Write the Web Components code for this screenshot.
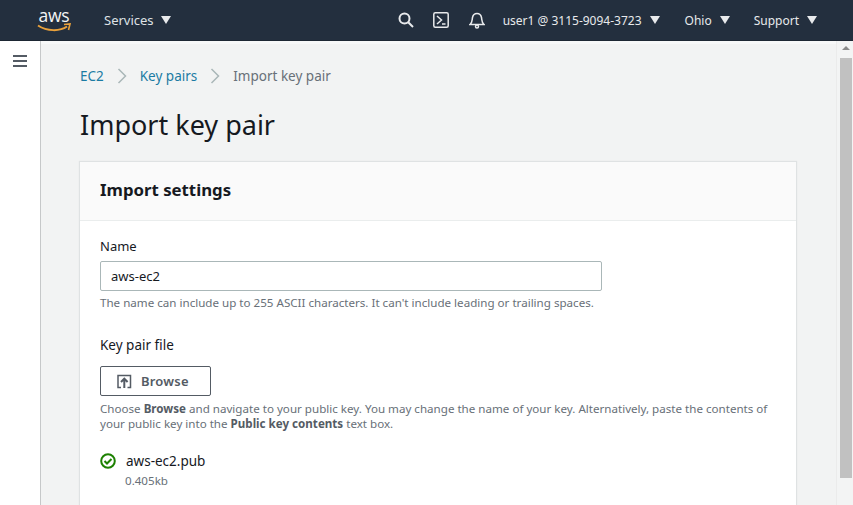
<!DOCTYPE html>
<html lang="en"><head><meta charset="utf-8"><title>Import key pair</title>
<style>
html,body{margin:0;height:505px;overflow:hidden;background:#f2f3f3}
body{font-family:"Noto Sans","Open Sans",sans-serif;color:#16191f}
</style></head><body>
<aws-console>
  <aws-topbar slot="top"></aws-topbar>
  <aws-sidenav slot="side"></aws-sidenav>
  <aws-crumbs></aws-crumbs>
  <h1-title>Import key pair</h1-title>
  <aws-card heading="Import settings">
    <aws-field label="Name" hint="The name can include up to 255 ASCII characters. It can't include leading or trailing spaces.">
      <aws-input value="aws-ec2"></aws-input>
    </aws-field>
    <aws-filefield></aws-filefield>
  </aws-card>
</aws-console>
<script>
function def(name, html){
  customElements.define(name, class extends HTMLElement{
    connectedCallback(){
      if(this.shadowRoot) return;
      const r=this.attachShadow({mode:'open'});
      r.innerHTML=typeof html==='function'?html(this):html;
    }
  });
}
const caret='<svg width="10" height="8" viewBox="0 0 10 8"><path d="M0 0H10L5 8Z" fill="#e8eaec"/></svg>';
const chev='<svg width="10" height="16" viewBox="0 0 10 16" fill="none" stroke="#aab7b8" stroke-width="1.5"><path d="M1.500 1l7 7-7 7"/></svg>';
def('aws-console',`<style>
:host{display:grid;grid-template-rows:41px 464px;grid-template-columns:41px 1fr 17px;height:505px;overflow:hidden}
.top{grid-column:1/4}
.main{padding:0 0 0 39px;min-width:0;overflow:hidden;border-top:3px solid #f7f8f8;box-sizing:border-box}
.bar{background:#f3f4f4;display:flex;flex-direction:column;align-items:center;border-left:1px solid #ebebeb;box-sizing:border-box;padding-left:1px}
.up{width:0;height:0;border:4px solid transparent;border-top:0;border-bottom:4px solid #8a8a8a;margin-top:5px}
.thumb{width:12px;height:420px;background:#c1c1c1;margin-top:8px}
</style>
<div class="top"><slot name="top"></slot></div>
<slot name="side"></slot>
<div class="main"><slot></slot></div>
<div class="bar"><div class="up"></div><div class="thumb"></div></div>`);
def('aws-topbar',`<style>
:host{display:flex;align-items:center;height:41px;background:#232f3e;color:#e8eaec;font-size:12px;box-sizing:border-box;padding:0 36px 0 37px;border-bottom:1px solid #1d2733}
.logo{display:flex;flex-direction:column;align-items:center;width:34px;height:32px;position:relative;margin-top:-2px}
.logo b{font:400 17.500px/1 "Open Sans","Noto Sans",sans-serif;letter-spacing:-.2px;color:#f3f4f5;margin-top:4px}
.logo svg{position:absolute;left:0;top:19px}
.svc{margin-left:33px;font-size:13px;display:flex;gap:7px;align-items:center;color:#dfe2e5}
.sp{flex:1}
.i{display:flex;align-items:center}
.u{display:flex;align-items:center;gap:8px;white-space:nowrap;font-size:12px}
</style>
<div class="logo"><b>aws</b><svg width="34" height="12" viewBox="0 0 34 12"><path d="M1 3.500C10 9.500 23 9.500 30 4.500" fill="none" stroke="#e9a13b" stroke-width="2"/><path d="M27 2.500L33 2 31.500 8" fill="none" stroke="#e9a13b" stroke-width="1.600"/></svg></div>
<div class="svc">Services ${caret}</div>
<div class="sp"></div>
<div class="i" style="margin-right:19px"><svg width="16" height="16" viewBox="0 0 16 16" fill="none" stroke="#e8eaec" stroke-width="2"><circle cx="6.500" cy="6.500" r="5"/><path d="M10.200 10.200L15 15"/></svg></div>
<div class="i" style="margin-right:20px"><svg width="16" height="16" viewBox="0 0 16 16" fill="none" stroke="#e8eaec" stroke-width="1.500"><rect x=".8" y=".8" width="14.400" height="14.400" rx="1.500"/><path d="M4 4l4.500 4L4 12M9 12h3.500"/></svg></div>
<div class="i" style="margin-right:18px"><svg width="16" height="17" viewBox="0 0 16 17" fill="none" stroke="#e8eaec" stroke-width="1.500"><path d="M1 12.500C3.500 10.500 3 8 3.500 5.500 4 3 6 1.500 8 1.500s4 1.500 4.500 4C13 8 12.500 10.500 15 12.500Z"/><circle cx="8" cy="14.500" r="1.500"/></svg></div>
<div class="u" style="margin-right:25px">user1 @ 3115-9094-3723 ${caret}</div>
<div class="u" style="margin-right:24px">Ohio ${caret}</div>
<div class="u">Support ${caret}</div>`);
def('aws-sidenav',`<style>
:host{display:block;background:#fff;border-right:1px solid #c6c8c9;box-sizing:border-box;padding:14px 0 0 13px}
i{display:block;width:14px;height:2px;background:#545b64;margin-bottom:3px}
</style><i></i><i></i><i></i>`);
def('aws-crumbs',`<style>
:host{display:flex;align-items:center;height:20px;margin-top:22px;font-size:13.500px;color:#687078;white-space:nowrap}
a{color:#1b7ba3}
svg{margin:0 13px}
</style>
<a>EC2</a>${chev}<a>Key pairs</a>${chev}<span>Import key pair</span>`);
def('h1-title',`<style>:host{display:block;font-size:27px;line-height:38px;margin-top:20px;color:#16191f;white-space:nowrap}</style><slot></slot>`);
def('aws-card',el=>`<style>
:host{display:block;width:716px;margin-top:18px;background:#fff;box-shadow:0 0 1px 1px rgba(0,28,36,.08);box-sizing:border-box;height:400px}
header{height:59px;background:#fafafa;border-bottom:1px solid #eaeded;box-sizing:border-box;padding:0 20px 3px;display:flex;align-items:center;font-size:16.800px;font-weight:700;color:#16191f}
.b{padding:15px 20px}
</style><header>${el.getAttribute('heading')}</header><div class="b"><slot></slot></div>`);
def('aws-field',el=>`<style>
:host{display:block}
.l{font-size:13px;line-height:20px;color:#16191f}
.h{font-size:11.600px;line-height:15px;color:#687078;margin-top:4px;white-space:nowrap}
.c{margin-top:5px}
</style><div class="l">${el.getAttribute('label')}</div><div class="c"><slot></slot></div><div class="h">${el.getAttribute('hint')}</div>`);
def('aws-input',el=>`<style>
:host{display:block;width:502px;height:30px;box-sizing:border-box;border:1px solid #aab7b8;border-radius:2px;font-size:13px;line-height:28px;padding-left:10px;color:#16191f;background:#fff}
</style>${el.getAttribute('value')}`);
def('aws-filefield',`<style>
:host{display:block;margin-top:25px}
.l{font-size:13.500px;line-height:20px}
.btn{display:flex;align-items:center;gap:9px;width:111px;height:30px;padding-left:16px;box-sizing:border-box;border:1px solid #545b64;border-radius:2px;margin-top:11px;font-size:13px;font-weight:600;color:#545b64;background:#fff;letter-spacing:.2px}
.h{font-size:11.600px;line-height:15px;color:#687078;margin-top:5px;width:690px;white-space:nowrap}
.h b{color:#545b64}
.f{display:flex;align-items:center;gap:10px;margin-top:20px;font-size:13.500px;line-height:20px;height:20px;color:#16191f}
.s{font-size:11.600px;line-height:15px;color:#687078;margin:2px 0 0 25px}
</style>
<div class="l">Key pair file</div>
<div class="btn"><svg width="15" height="15" viewBox="0 0 15 15" fill="none" stroke="#545b64" stroke-width="1.500"><path d="M4 13.500H1V1.500H13.500V13.500H10.500"/><path d="M7.300 14V5M4 8l3.300-3.300L10.600 8" stroke-width="2"/></svg>Browse</div>
<div class="h">Choose <b>Browse</b> and navigate to your public key. You may change the name of your key. Alternatively, paste the contents of<br>your public key into the <b>Public key contents</b> text box.</div>
<div class="f"><svg width="16" height="16" viewBox="0 0 16 16" fill="none" stroke="#1d8102" stroke-width="2"><circle cx="8" cy="8" r="6.800"/><path d="M4.500 8l2.500 2.500L11.500 6"/></svg>aws-ec2.pub</div>
<div class="s">0.405kb</div>`);
</script>
</body></html>
